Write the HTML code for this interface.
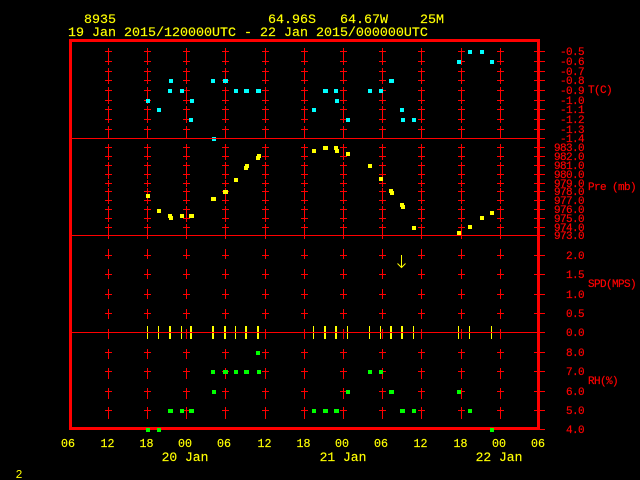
<!DOCTYPE html>
<html><head><meta charset="utf-8"><title>Plot</title>
<style>
html,body{margin:0;padding:0;background:#000;width:640px;height:480px;overflow:hidden}
svg{display:block}
text{font-family:"Liberation Mono",monospace}
.h{font-size:13.33px;fill:#ff0;stroke:#ff0;stroke-width:.15}
.b{font-size:11.67px;fill:#ff0;stroke:#ff0;stroke-width:.15;text-anchor:middle}
.d{font-size:13px;fill:#ff0;stroke:#ff0;stroke-width:.15;text-anchor:middle}
.r{font-size:11px;letter-spacing:-.6px;fill:#f00;stroke:#f00;stroke-width:.2;text-anchor:end}
.s{font-size:11px;letter-spacing:-.6px;fill:#f00;stroke:#f00;stroke-width:.2}
</style></head><body>
<svg xmlns="http://www.w3.org/2000/svg" width="640" height="480" viewBox="0 0 640 480">
<defs>
<g id="c" fill="none" stroke="#f00" shape-rendering="crispEdges">
<path d="M.5 48V65M.5 68V84M.5 87V104M.5 106V123M.5 126V138M.5 144V160M.5 162V179M.5 180V187M.5 188V204M.5 206V222M.5 224V239M.5 249V259M.5 269V279M.5 289V299M.5 309V319M.5 329V339M.5 349V359M.5 368V379M.5 388V399M.5 407V419"/>
<path d="M-3 51.5H4M-3 61.5H4M-3 71.5H4M-3 80.5H4M-3 90.5H4M-3 100.5H4M-3 109.5H4M-3 119.5H4M-3 129.5H4M-3 147.5H4M-3 156.5H4M-3 165.5H4M-3 174.5H4M-3 183.5H4M-3 191.5H4M-3 200.5H4M-3 209.5H4M-3 218.5H4M-3 227.5H4M-3 255.5H4M-3 274.5H4M-3 294.5H4M-3 313.5H4M-3 352.5H4M-3 371.5H4M-3 391.5H4M-3 410.5H4"/>
</g>
</defs>
<use href="#c" x="108"/><use href="#c" x="147"/><use href="#c" x="186"/><use href="#c" x="225"/><use href="#c" x="265"/><use href="#c" x="304"/><use href="#c" x="343"/><use href="#c" x="382"/><use href="#c" x="421"/><use href="#c" x="461"/><use href="#c" x="500"/>

<g fill="#f00" shape-rendering="crispEdges">
<rect x="69" y="39" width="471" height="3"/>
<rect x="69" y="39" width="3" height="391"/>
<rect x="537" y="39" width="3" height="391"/>
<rect x="69" y="427" width="471" height="3"/>
<rect x="72" y="138" width="465" height="1"/>
<rect x="72" y="235" width="465" height="1"/>
<rect x="72" y="332" width="465" height="1"/>
</g>
<path fill="none" stroke="#f00" shape-rendering="crispEdges" d="M534 51.5H545M534 61.5H545M534 71.5H545M534 80.5H545M534 90.5H545M534 100.5H545M534 109.5H545M534 119.5H545M534 129.5H545M534 138.5H545M534 147.5H545M534 156.5H545M534 165.5H545M534 174.5H545M534 183.5H545M534 191.5H545M534 200.5H545M534 209.5H545M534 218.5H545M534 227.5H545M534 235.5H545M534 255.5H545M534 274.5H545M534 294.5H545M534 313.5H545M534 332.5H545M534 352.5H545M534 371.5H545M534 391.5H545M534 410.5H545M534 429.5H545"/>

<!-- temperature -->
<path fill="#0ff" shape-rendering="crispEdges" d="M169 79h4v4h-4zM211 79h4v4h-4zM223 79h5v4h-5zM168 89h4v4h-4zM180 89h4v4h-4zM234 89h4v4h-4zM244 89h5v4h-5zM256 89h5v4h-5zM146 99h4v4h-4zM190 99h4v4h-4zM157 108h4v4h-4zM312 108h4v4h-4zM189 118h4v4h-4zM212 137h4v4h-4zM323 89h5v4h-5zM334 89h4v4h-4zM368 89h4v4h-4zM379 89h4v4h-4zM335 99h4v4h-4zM346 118h4v4h-4zM389 79h5v4h-5zM400 108h4v4h-4zM401 118h4v4h-4zM412 118h4v4h-4zM468 50h4v4h-4zM480 50h4v4h-4zM457 60h4v4h-4zM490 60h4v4h-4z"/>
<rect x="72" y="138" width="465" height="1" fill="#f00" shape-rendering="crispEdges"/>

<!-- pressure -->
<path fill="#ff0" shape-rendering="crispEdges" d="M312 149h4v4h-4zM257 154h4v4h-4zM256 156h4v4h-4zM245 164h4v4h-4zM244 166h4v4h-4zM234 178h4v4h-4zM223 190h5v4h-5zM211 197h5v4h-5zM146 194h4v4h-4zM157 209h4v4h-4zM168 214h4v4h-4zM169 216h4v4h-4zM180 214h4v4h-4zM189 214h5v4h-5zM323 146h5v4h-5zM334 146h4v4h-4zM335 149h4v4h-4zM346 152h4v4h-4zM368 164h4v4h-4zM379 177h4v4h-4zM389 189h4v4h-4zM390 191h4v4h-4zM400 203h4v4h-4zM401 205h4v4h-4zM412 226h4v4h-4zM457 231h4v4h-4zM468 225h4v4h-4zM480 216h4v4h-4zM490 211h4v4h-4z"/>

<!-- speed bars -->
<path fill="#ff0" shape-rendering="crispEdges" d="M147 326h1v13h-1zM158 326h1v13h-1zM169 326h2v13h-2zM181 326h1v13h-1zM190 326h2v13h-2zM212 326h2v13h-2zM224 326h2v13h-2zM235 326h1v13h-1zM245 326h2v13h-2zM257 326h2v13h-2zM313 326h1v13h-1zM324 326h2v13h-2zM335 326h2v13h-2zM347 326h1v13h-1zM369 326h1v13h-1zM380 326h1v13h-1zM390 326h2v13h-2zM401 326h2v13h-2zM413 326h1v13h-1zM458 326h1v13h-1zM469 326h1v13h-1zM491 326h1v13h-1z"/>
<rect x="72" y="332" width="465" height="1" fill="#f00" shape-rendering="crispEdges"/>

<!-- wind arrow -->
<path fill="none" stroke="#ff0" stroke-width="1" d="M401.5 255V267.5M397.5 263.5L401.5 267.5L405.5 263.5"/>

<!-- humidity -->
<path fill="#0f0" shape-rendering="crispEdges" d="M256 351h4v4h-4zM211 370h4v4h-4zM223 370h5v4h-5zM234 370h4v4h-4zM244 370h5v4h-5zM257 370h4v4h-4zM212 390h4v4h-4zM168 409h5v4h-5zM180 409h4v4h-4zM189 409h5v4h-5zM312 409h4v4h-4zM146 428h4v4h-4zM157 428h4v4h-4zM368 370h4v4h-4zM379 370h4v4h-4zM346 390h4v4h-4zM389 390h5v4h-5zM457 390h4v4h-4zM323 409h5v4h-5zM334 409h5v4h-5zM400 409h5v4h-5zM412 409h4v4h-4zM468 409h4v4h-4zM490 428h4v4h-4z"/>

<!-- header -->
<text class="h" x="84" y="23">8935</text>
<text class="h" x="268" y="23">64.96S</text>
<text class="h" x="340" y="23">64.67W</text>
<text class="h" x="420" y="23">25M</text>
<text class="h" x="68" y="36">19 Jan 2015/120000UTC - 22 Jan 2015/000000UTC</text>

<!-- right labels -->
<text class="r" x="584" y="55">-0.5</text>
<text class="r" x="584" y="65">-0.6</text>
<text class="r" x="584" y="75">-0.7</text>
<text class="r" x="584" y="84">-0.8</text>
<text class="r" x="584" y="94">-0.9</text>
<text class="r" x="584" y="104">-1.0</text>
<text class="r" x="584" y="113">-1.1</text>
<text class="r" x="584" y="123">-1.2</text>
<text class="r" x="584" y="133">-1.3</text>
<text class="r" x="584" y="142">-1.4</text>
<text class="r" x="584" y="151">983.0</text>
<text class="r" x="584" y="160">982.0</text>
<text class="r" x="584" y="169">981.0</text>
<text class="r" x="584" y="178">980.0</text>
<text class="r" x="584" y="187">979.0</text>
<text class="r" x="584" y="195">978.0</text>
<text class="r" x="584" y="204">977.0</text>
<text class="r" x="584" y="213">976.0</text>
<text class="r" x="584" y="222">975.0</text>
<text class="r" x="584" y="231">974.0</text>
<text class="r" x="584" y="239">973.0</text>
<text class="r" x="584" y="259">2.0</text>
<text class="r" x="584" y="278">1.5</text>
<text class="r" x="584" y="298">1.0</text>
<text class="r" x="584" y="317">0.5</text>
<text class="r" x="584" y="336">0.0</text>
<text class="r" x="584" y="356">8.0</text>
<text class="r" x="584" y="375">7.0</text>
<text class="r" x="584" y="395">6.0</text>
<text class="r" x="584" y="414">5.0</text>
<text class="r" x="584" y="433">4.0</text>

<text class="s" x="588" y="93">T(C)</text>
<text class="s" x="588" y="190">Pre (mb)</text>
<text class="s" x="588" y="287">SPD(MPS)</text>
<text class="s" x="588" y="384">RH(%)</text>

<!-- bottom labels -->
<text class="b" x="68" y="447">06</text>
<text class="b" x="107.5" y="447">12</text>
<text class="b" x="146.5" y="447">18</text>
<text class="b" x="185" y="447">00</text>
<text class="b" x="224" y="447">06</text>
<text class="b" x="264.5" y="447">12</text>
<text class="b" x="303.5" y="447">18</text>
<text class="b" x="342" y="447">00</text>
<text class="b" x="381" y="447">06</text>
<text class="b" x="420.5" y="447">12</text>
<text class="b" x="460.5" y="447">18</text>
<text class="b" x="499" y="447">00</text>
<text class="b" x="538" y="447">06</text>
<text class="d" x="185" y="461">20 Jan</text>
<text class="d" x="343" y="461">21 Jan</text>
<text class="d" x="499" y="461">22 Jan</text>
<text x="15.5" y="478" font-size="11.67" fill="#ff0">2</text>
</svg>
</body></html>
